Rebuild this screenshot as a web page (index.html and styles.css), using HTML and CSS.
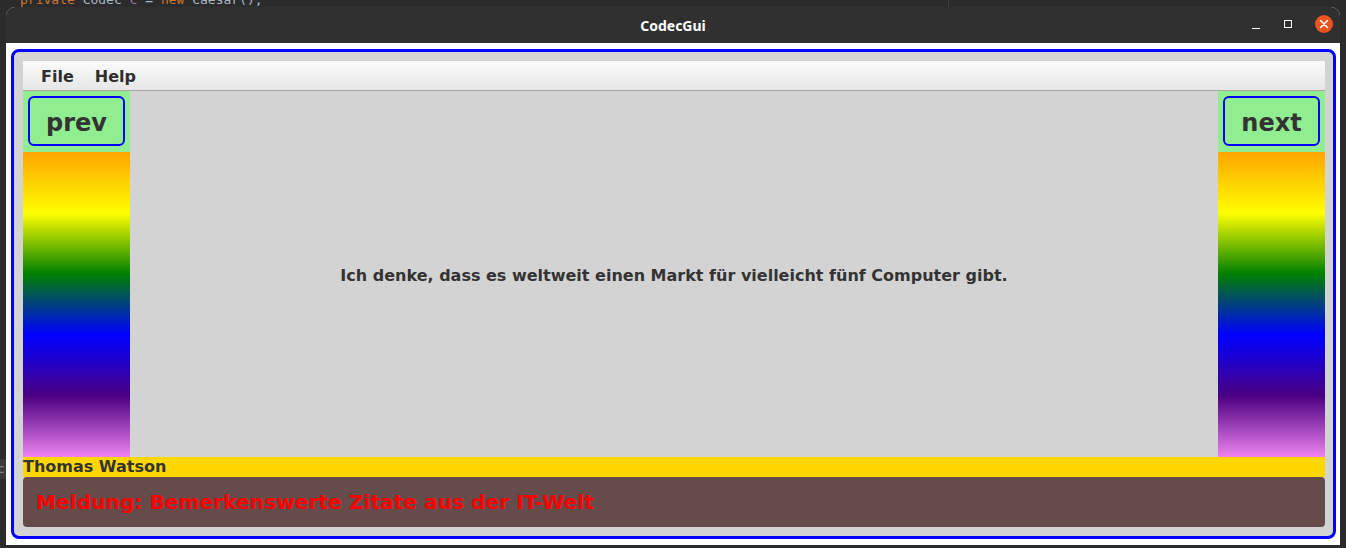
FILE: index.html
```html
<!DOCTYPE html>
<html>
<head>
<meta charset="utf-8">
<link rel="stylesheet" href="styles.css">
</head>
<body>
<div class="desktop">
  <div class="code-line"><span class="kw">private</span> <span class="id">Codec</span> <span class="var">c</span> <span class="id">=</span> <span class="kw">new</span> <span class="id">Caesar();</span></div>
  <div class="editor-divider"></div>
  <div class="side-strip">c</div>

  <div class="window">
    <div class="titlebar">
      <div class="title">CodecGui</div>
      <div class="controls">
        <span class="ctl minimize"></span>
        <span class="ctl maximize"></span>
        <span class="ctl close">
          <svg width="18" height="18" viewBox="0 0 18 18"><path d="M5.5 5.5 L12.5 12.5 M12.5 5.5 L5.5 12.5" stroke="#fff" stroke-width="1.5" stroke-linecap="round"/></svg>
        </span>
      </div>
    </div>
    <div class="content">
      <div class="panel">
        <div class="menubar">
          <span class="menu-item">File</span>
          <span class="menu-item">Help</span>
        </div>
        <div class="center-row">
          <div class="side">
            <div class="side-top"><button class="nav-btn">prev</button></div>
            <div class="rainbow"></div>
          </div>
          <div class="quote-area">
            <p class="quote">Ich denke, dass es weltweit einen Markt für vielleicht fünf Computer gibt.</p>
          </div>
          <div class="side">
            <div class="side-top"><button class="nav-btn">next</button></div>
            <div class="rainbow"></div>
          </div>
        </div>
        <div class="author">Thomas Watson</div>
        <div class="message">Meldung: Bemerkenswerte Zitate aus der IT-Welt</div>
      </div>
    </div>
  </div>
</div>
</body>
</html>
```

FILE: styles.css
```css
html, body {
  margin: 0;
  padding: 0;
  width: 1346px;
  height: 548px;
  overflow: hidden;
  background: #2b2b2b;
}

.desktop {
  position: relative;
  width: 1346px;
  height: 548px;
  background: #2b2b2b;
  font-family: "DejaVu Sans", sans-serif;
}

.code-line {
  position: absolute;
  left: 20px;
  top: -8px;
  font-family: "DejaVu Sans Mono", monospace;
  font-size: 13px;
  line-height: 16px;
  white-space: pre;
}
.code-line .kw { color: #cc7832; }
.code-line .id { color: #a9b7c6; }
.code-line .var { color: #9876aa; }

.editor-divider {
  position: absolute;
  left: 948px;
  top: 0;
  width: 1px;
  height: 8px;
  background: #3e3e3e;
}

.side-strip {
  position: absolute;
  left: 0;
  top: 459px;
  width: 6px;
  height: 20px;
  overflow: hidden;
  background: #3a3a3a;
  color: #8a8a8a;
  font-family: "DejaVu Sans Mono", monospace;
  font-size: 13px;
  line-height: 20px;
  text-indent: -3px;
}

.window {
  position: absolute;
  left: 6px;
  top: 7px;
  width: 1334px;
  height: 538px;
  display: flex;
  flex-direction: column;
  border-radius: 9px 9px 0 0;
  overflow: hidden;
  background: #ffffff;
}

.titlebar {
  position: relative;
  height: 36px;
  flex: 0 0 36px;
  background: #303030;
  display: flex;
  align-items: center;
  justify-content: center;
}

.title {
  font-family: "Noto Sans", "DejaVu Sans", sans-serif;
  font-weight: 700;
  font-size: 14px;
  color: #ffffff;
}

.controls {
  position: absolute;
  right: 7px;
  top: 8px;
  display: flex;
  align-items: center;
}

.ctl {
  display: flex;
  align-items: center;
  justify-content: center;
}

.minimize {
  width: 8px;
  height: 1px;
  background: #ffffff;
  margin-top: 9px;
  margin-right: 24px;
}

.maximize {
  width: 6px;
  height: 6px;
  border: 1px solid #ffffff;
  margin-right: 23px;
}

.close {
  width: 18px;
  height: 18px;
  border-radius: 50%;
  background: #e95420;
}

.content {
  flex: 1;
  padding: 6px 4px 0 5px;
  background: #ffffff;
}

.panel {
  box-sizing: border-box;
  width: 1325px;
  height: 490px;
  border: 3px solid #0000ff;
  border-radius: 8px;
  background: #d3d3d3;
  padding: 9px 8px 9px 9px;
  display: flex;
  flex-direction: column;
}

.menubar {
  box-sizing: border-box;
  height: 30px;
  flex: 0 0 30px;
  background: linear-gradient(#fbfbfb, #e6e6e6);
  border-bottom: 1px solid #a8a8a8;
  display: flex;
  align-items: center;
  padding-left: 18px;
  padding-top: 2px;
  gap: 21px;
}

.menu-item {
  font-weight: 700;
  font-size: 16px;
  color: #2e2e2e;
}

.center-row {
  flex: 0 0 366px;
  display: flex;
}

.side {
  width: 107px;
  flex: 0 0 107px;
  display: flex;
  flex-direction: column;
}

.side-top {
  box-sizing: border-box;
  height: 61px;
  flex: 0 0 61px;
  background: #90ee90;
  padding: 5px;
}

.nav-btn {
  box-sizing: border-box;
  width: 97px;
  height: 50px;
  margin: 0;
  padding: 3px 0 0 0;
  border: 2px solid #0000ff;
  border-radius: 6px;
  background: #90ee90;
  font-family: "DejaVu Sans", sans-serif;
  font-weight: 700;
  font-size: 24px;
  color: #333333;
}

.rainbow {
  flex: 1;
  background: linear-gradient(#ffa500, #ffff00, #008000, #0000ff, #4b0082, #ee82ee);
}

.quote-area {
  flex: 1;
  display: flex;
  align-items: center;
  justify-content: center;
  background: #d3d3d3;
}

.quote {
  margin: 3px 0 0 0;
  font-weight: 700;
  font-size: 16px;
  color: #333333;
}

.author {
  height: 20px;
  flex: 0 0 20px;
  background: #ffd700;
  font-weight: 700;
  font-size: 16px;
  line-height: 20px;
  color: #333333;
}

.message {
  height: 50px;
  flex: 0 0 50px;
  box-sizing: border-box;
  background: #664b4b;
  border-radius: 4px;
  padding-left: 13px;
  display: flex;
  align-items: center;
  font-weight: 700;
  font-size: 20.2px;
  color: #ff0000;
}
```
